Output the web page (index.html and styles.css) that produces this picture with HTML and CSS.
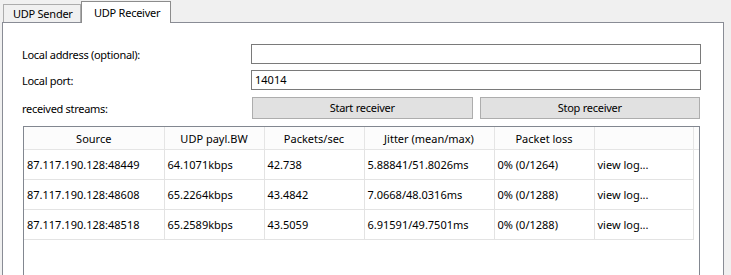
FILE: index.html
```html
<!DOCTYPE html>
<html>
<head>
<meta charset="utf-8">
<link rel="stylesheet" href="styles.css">
</head>
<body>
<div class="window">
  <div class="tabs">
    <div class="tab">UDP Sender</div>
    <div class="tab active">UDP Receiver</div>
  </div>
  <div class="panel">
    <div class="form">
      <div class="label">Local address (optional):</div>
      <div class="input"></div>
      <div class="label">Local port:</div>
      <div class="input">14014</div>
      <div class="label">received streams:</div>
      <div class="buttons">
        <div class="btn">Start receiver</div>
        <div class="btn">Stop receiver</div>
      </div>
      <div class="list">
        <table class="grid">
          <colgroup>
            <col class="c-src"><col class="c-bw"><col class="c-pps"><col class="c-jit"><col class="c-loss"><col class="c-log"><col class="c-fill">
          </colgroup>
          <thead>
            <tr><th>Source</th><th>UDP payl.BW</th><th>Packets/sec</th><th>Jitter (mean/max)</th><th>Packet loss</th><th></th><th class="fill"></th></tr>
          </thead>
          <tbody>
            <tr><td>87.117.190.128:48449</td><td>64.1071kbps</td><td>42.738</td><td>5.88841/51.8026ms</td><td>0% (0/1264)</td><td>view log...</td><td class="fill"></td></tr>
            <tr><td>87.117.190.128:48608</td><td>65.2264kbps</td><td>43.4842</td><td>7.0668/48.0316ms</td><td>0% (0/1288)</td><td>view log...</td><td class="fill"></td></tr>
            <tr><td>87.117.190.128:48518</td><td>65.2589kbps</td><td>43.5059</td><td>6.91591/49.7501ms</td><td>0% (0/1288)</td><td>view log...</td><td class="fill"></td></tr>
          </tbody>
        </table>
      </div>
    </div>
  </div>
</div>
</body>
</html>
```
FILE: styles.css
```css
html, body {
  margin: 0;
  padding: 0;
  background: #f0f0f0;
  overflow: hidden;
}
body {
  font-family: "Noto Sans", "DejaVu Sans", sans-serif;
  font-size: 11px;
  color: #000;
  width: 731px;
  height: 275px;
}
.window {
  display: flex;
  flex-direction: column;
}
.tabs {
  display: flex;
  align-items: flex-end;
  height: 22px;
  padding-left: 3px;
  position: relative;
  z-index: 2;
  letter-spacing: -0.25px;
}
.tab {
  box-sizing: border-box;
  height: 18px;
  width: 78px;
  border: 1px solid #acacac;
  border-bottom: none;
  background: #f0f0f0;
  padding-left: 9px;
  line-height: 17px;
}
.tab.active {
  width: 90px;
  height: 22px;
  margin-bottom: -1px;
  background: #fff;
  padding-left: 12px;
  line-height: 21px;
  border-color: #8c8c8c;
}
.panel {
  box-sizing: border-box;
  margin-left: 2px;
  width: 722px;
  height: 300px;
  background: #fff;
  border: 1px solid #898c95;
  padding: 21px 0 0 19px;
}
.form {
  display: grid;
  grid-template-columns: 229px 450px;
  grid-auto-rows: auto;
  row-gap: 6px;
  align-items: center;
}
.label {
  line-height: 14px;
  padding-top: 2px;
  letter-spacing: -0.3px;
}
.input {
  box-sizing: border-box;
  height: 20px;
  border: 1px solid #7a7a7a;
  background: #fff;
  padding-left: 3px;
  line-height: 17px;
}
.buttons {
  display: grid;
  grid-template-columns: 1fr 1fr;
  column-gap: 7px;
  margin: 1px 1px 0 1px;
}
.btn {
  box-sizing: border-box;
  height: 22px;
  background: #e1e1e1;
  border: 1px solid #adadad;
  text-align: center;
  line-height: 19px;
  letter-spacing: -0.25px;
}
.list {
  grid-column: 1 / 3;
  box-sizing: border-box;
  margin: 1px 1px 0 1px;
  height: 160px;
  border: 1px solid #828790;
  background: #fff;
}
.grid {
  border-collapse: collapse;
  table-layout: fixed;
  width: 675px;
}
.c-src { width: 140px; }
.c-bw { width: 100px; }
.c-pps { width: 100px; }
.c-jit { width: 130px; }
.c-loss { width: 100px; }
.c-log { width: 99px; }
.c-fill { width: 6px; }
.grid th {
  height: 22px;
  padding: 0;
  font-weight: normal;
  text-align: center;
  background: #fcfcfc;
  border-right: 1px solid #e5e5e5;
  border-bottom: 1px solid #e5e5e5;
  white-space: nowrap;
}
.grid td {
  height: 29px;
  padding: 0 0 0 3px;
  border-right: 1px solid #e3e3e3;
  border-bottom: 1px solid #e3e3e3;
  white-space: nowrap;
  overflow: hidden;
}
.grid th.fill {
  border-right: none;
}
.grid td.fill {
  border: none;
  background: #fff;
}
```
